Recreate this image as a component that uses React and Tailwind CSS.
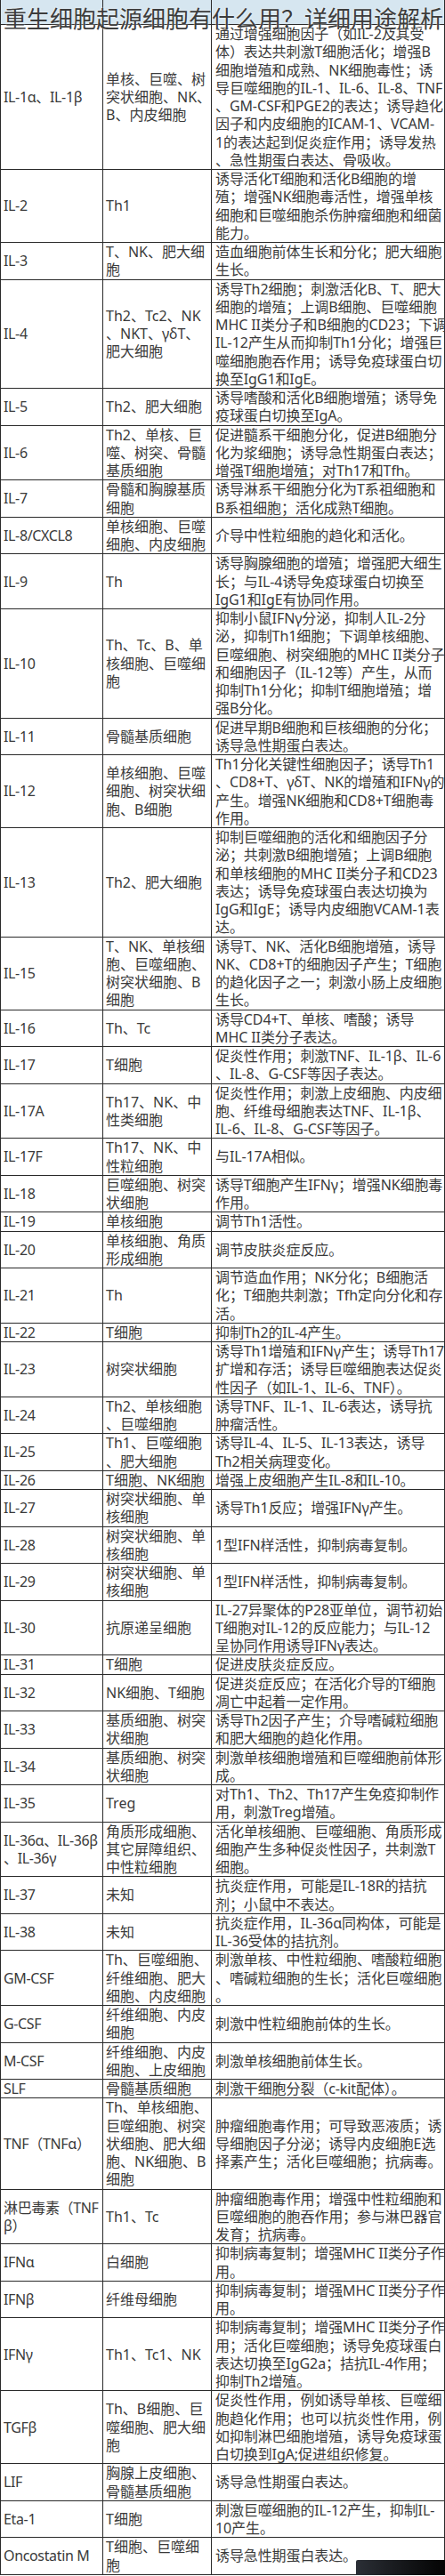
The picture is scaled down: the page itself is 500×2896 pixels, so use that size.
import React from 'react';

// cytokine table: [name, source cells, function] — "\n" keeps the original line breaks
const rows = [
  ['IL-1α、IL-1β', '单核、巨噬、树\n突状细胞、NK、\nB、内皮细胞', '通过增强细胞因子（如IL-2及其受\n体）表达共刺激T细胞活化；增强B\n细胞增殖和成熟、NK细胞毒性；诱\n导巨噬细胞的IL-1、IL-6、IL-8、TNF\n、GM-CSF和PGE2的表达；诱导趋化\n因子和内皮细胞的ICAM-1、VCAM-\n1的表达起到促炎症作用；诱导发热\n、急性期蛋白表达、骨吸收。'],
  ['IL-2', 'Th1', '诱导活化T细胞和活化B细胞的增\n殖；增强NK细胞毒活性，增强单核\n细胞和巨噬细胞杀伤肿瘤细胞和细菌\n能力。'],
  ['IL-3', 'T、NK、肥大细\n胞', '造血细胞前体生长和分化；肥大细胞\n生长。'],
  ['IL-4', 'Th2、Tc2、NK\n、NKT、γδT、\n肥大细胞', '诱导Th2细胞；刺激活化B、T、肥大\n细胞的增殖；上调B细胞、巨噬细胞\nMHC II类分子和B细胞的CD23；下调\nIL-12产生从而抑制Th1分化；增强巨\n噬细胞胞吞作用；诱导免疫球蛋白切\n换至IgG1和IgE。'],
  ['IL-5', 'Th2、肥大细胞', '诱导嗜酸和活化B细胞增殖；诱导免\n疫球蛋白切换至IgA。'],
  ['IL-6', 'Th2、单核、巨\n噬、树突、骨髓\n基质细胞', '促进髓系干细胞分化，促进B细胞分\n化为浆细胞；诱导急性期蛋白表达；\n增强T细胞增殖；对Th17和Tfh。'],
  ['IL-7', '骨髓和胸腺基质\n细胞', '诱导淋系干细胞分化为T系祖细胞和\nB系祖细胞；活化成熟T细胞。'],
  ['IL-8/CXCL8', '单核细胞、巨噬\n细胞、内皮细胞', '介导中性粒细胞的趋化和活化。'],
  ['IL-9', 'Th', '诱导胸腺细胞的增殖；增强肥大细生\n长；与IL-4诱导免疫球蛋白切换至\nIgG1和IgE有协同作用。'],
  ['IL-10', 'Th、Tc、B、单\n核细胞、巨噬细\n胞', '抑制小鼠IFNγ分泌，抑制人IL-2分\n泌，抑制Th1细胞；下调单核细胞、\n巨噬细胞、树突细胞的MHC II类分子\n和细胞因子（IL-12等）产生，从而\n抑制Th1分化；抑制T细胞增殖；增\n强B分化。'],
  ['IL-11', '骨髓基质细胞', '促进早期B细胞和巨核细胞的分化；\n诱导急性期蛋白表达。'],
  ['IL-12', '单核细胞、巨噬\n细胞、树突状细\n胞、B细胞', 'Th1分化关键性细胞因子；诱导Th1\n、CD8+T、γδT、NK的增殖和IFNγ的\n产生。增强NK细胞和CD8+T细胞毒\n作用。'],
  ['IL-13', 'Th2、肥大细胞', '抑制巨噬细胞的活化和细胞因子分\n泌；共刺激B细胞增殖；上调B细胞\n和单核细胞的MHC II类分子和CD23\n表达；诱导免疫球蛋白表达切换为\nIgG和IgE；诱导内皮细胞VCAM-1表\n达。'],
  ['IL-15', 'T、NK、单核细\n胞、巨噬细胞、\n树突状细胞、B\n细胞', '诱导T、NK、活化B细胞增殖，诱导\nNK、CD8+T的细胞因子产生；T细胞\n的趋化因子之一；刺激小肠上皮细胞\n生长。'],
  ['IL-16', 'Th、Tc', '诱导CD4+T、单核、嗜酸；诱导\nMHC II类分子表达。'],
  ['IL-17', 'T细胞', '促炎性作用；刺激TNF、IL-1β、IL-6\n、IL-8、G-CSF等因子表达。'],
  ['IL-17A', 'Th17、NK、中\n性类细胞', '促炎性作用；刺激上皮细胞、内皮细\n胞、纤维母细胞表达TNF、IL-1β、\nIL-6、IL-8、G-CSF等因子。'],
  ['IL-17F', 'Th17、NK、中\n性粒细胞', '与IL-17A相似。'],
  ['IL-18', '巨噬细胞、树突\n状细胞', '诱导T细胞产生IFNγ；增强NK细胞毒\n作用。'],
  ['IL-19', '单核细胞', '调节Th1活性。'],
  ['IL-20', '单核细胞、角质\n形成细胞', '调节皮肤炎症反应。'],
  ['IL-21', 'Th', '调节造血作用；NK分化；B细胞活\n化；T细胞共刺激；Tfh定向分化和存\n活。'],
  ['IL-22', 'T细胞', '抑制Th2的IL-4产生。'],
  ['IL-23', '树突状细胞', '诱导Th1增殖和IFNγ产生；诱导Th17\n扩增和存活；诱导巨噬细胞表达促炎\n性因子（如IL-1、IL-6、TNF）。'],
  ['IL-24', 'Th2、单核细胞\n、巨噬细胞', '诱导TNF、IL-1、IL-6表达，诱导抗\n肿瘤活性。'],
  ['IL-25', 'Th1、巨噬细胞\n、肥大细胞', '诱导IL-4、IL-5、IL-13表达，诱导\nTh2相关病理变化。'],
  ['IL-26', 'T细胞、NK细胞', '增强上皮细胞产生IL-8和IL-10。'],
  ['IL-27', '树突状细胞、单\n核细胞', '诱导Th1反应；增强IFNγ产生。'],
  ['IL-28', '树突状细胞、单\n核细胞', '1型IFN样活性，抑制病毒复制。'],
  ['IL-29', '树突状细胞、单\n核细胞', '1型IFN样活性，抑制病毒复制。'],
  ['IL-30', '抗原递呈细胞', 'IL-27异聚体的P28亚单位，调节初始\nT细胞对IL-12的反应能力；与IL-12\n呈协同作用诱导IFNγ表达。'],
  ['IL-31', 'T细胞', '促进皮肤炎症反应。'],
  ['IL-32', 'NK细胞、T细胞', '促进炎症反应；在活化介导的T细胞\n凋亡中起着一定作用。'],
  ['IL-33', '基质细胞、树突\n状细胞', '诱导Th2因子产生；介导嗜碱粒细胞\n和肥大细胞的趋化作用。'],
  ['IL-34', '基质细胞、树突\n状细胞', '刺激单核细胞增殖和巨噬细胞前体形\n成。'],
  ['IL-35', 'Treg', '对Th1、Th2、Th17产生免疫抑制作\n用，刺激Treg增殖。'],
  ['IL-36α、IL-36β\n、IL-36γ', '角质形成细胞、\n其它屏障组织、\n中性粒细胞', '活化单核细胞、巨噬细胞、角质形成\n细胞产生多种促炎性因子，共刺激T\n细胞。'],
  ['IL-37', '未知', '抗炎症作用，可能是IL-18R的拮抗\n剂；小鼠中不表达。'],
  ['IL-38', '未知', '抗炎症作用，IL-36α同构体，可能是\nIL-36受体的拮抗剂。'],
  ['GM-CSF', 'Th、巨噬细胞、\n纤维细胞、肥大\n细胞、内皮细胞', '刺激单核、中性粒细胞、嗜酸粒细胞\n、嗜碱粒细胞的生长；活化巨噬细胞\n。'],
  ['G-CSF', '纤维细胞、内皮\n细胞', '刺激中性粒细胞前体的生长。'],
  ['M-CSF', '纤维细胞、内皮\n细胞、上皮细胞', '刺激单核细胞前体生长。'],
  ['SLF', '骨髓基质细胞', '刺激干细胞分裂（c-kit配体）。'],
  ['TNF（TNFα）', 'Th、单核细胞、\n巨噬细胞、树突\n状细胞、肥大细\n胞、NK细胞、B\n细胞', '肿瘤细胞毒作用；可导致恶液质；诱\n导细胞因子分泌；诱导内皮细胞E选\n择素产生；活化巨噬细胞；抗病毒。'],
  ['淋巴毒素（TNF\nβ）', 'Th1、Tc', '肿瘤细胞毒作用；增强中性粒细胞和\n巨噬细胞的胞吞作用；参与淋巴器官\n发育；抗病毒。'],
  ['IFNα', '白细胞', '抑制病毒复制；增强MHC II类分子作\n用。'],
  ['IFNβ', '纤维母细胞', '抑制病毒复制；增强MHC II类分子作\n用。'],
  ['IFNγ', 'Th1、Tc1、NK', '抑制病毒复制；增强MHC II类分子作\n用；活化巨噬细胞；诱导免疫球蛋白\n表达切换至IgG2a；拮抗IL-4作用；\n抑制Th2增殖。'],
  ['TGFβ', 'Th、B细胞、巨\n噬细胞、肥大细\n胞', '促炎性作用，例如诱导单核、巨噬细\n胞趋化作用；也可以抗炎性作用，例\n如抑制淋巴细胞增殖，诱导免疫球蛋\n白切换到IgA;促进组织修复。'],
  ['LIF', '胸腺上皮细胞、\n骨髓基质细胞', '诱导急性期蛋白表达。'],
  ['Eta-1', 'T细胞', '刺激巨噬细胞的IL-12产生，抑制IL-\n10产生。'],
  ['Oncostatin M', 'T细胞、巨噬细\n胞', '诱导急性期蛋白表达。'],
];

function Cell({ text, className = '' }) {
  return (
    <div className={`flex items-center whitespace-pre ${className}`}>
      {text}
    </div>
  );
}

export default function App() {
  return (
    <div className="relative w-[500px] bg-white text-[#3a3a3a] font-['Noto_Sans','Noto_Sans_CJK_SC',sans-serif] text-[16px] leading-[20.25px]">
      <div className="border-l border-r border-[#2a2a2a]">
        <div className="grid grid-cols-[115px_122px_1fr] h-[28px] bg-[#d6e6f0] border-b border-[#2a2a2a]">
          <div className="border-r border-[#2a2a2a]" />
          <div className="border-r border-[#2a2a2a]" />
          <div />
        </div>
        {rows.map(([name, source, fn], i) => (
          <div key={i} className="grid grid-cols-[115px_122px_1fr] border-b border-[#2a2a2a]" data-testid={`row-${name}`}>
            <Cell text={name} className="pl-[3px] pr-[1px] tracking-[-0.35px] border-r border-[#2a2a2a]" />
            <Cell text={source} className="pl-[3px] border-r border-[#2a2a2a]" />
            <Cell text={fn} className="pl-[4px] tracking-[-0.1px]" />
          </div>
        ))}
      </div>

      {/* page title laid over the header */}
      <h1 className="absolute top-[4px] left-[4px] text-[26px] leading-[32px] text-[#3c3c3c] whitespace-nowrap font-['Noto_Sans_CJK_SC',sans-serif] [text-shadow:0_0_2px_#ffffff]">
        重生细胞起源细胞有什么用？详细用途解析
      </h1>

      {/* dark watermark corner */}
      <div className="absolute right-0 bottom-0 w-[100px] h-[17px] bg-gradient-to-r from-[#2b2f36] to-[#050505] rounded-tl-[2px]" />
    </div>
  );
}
